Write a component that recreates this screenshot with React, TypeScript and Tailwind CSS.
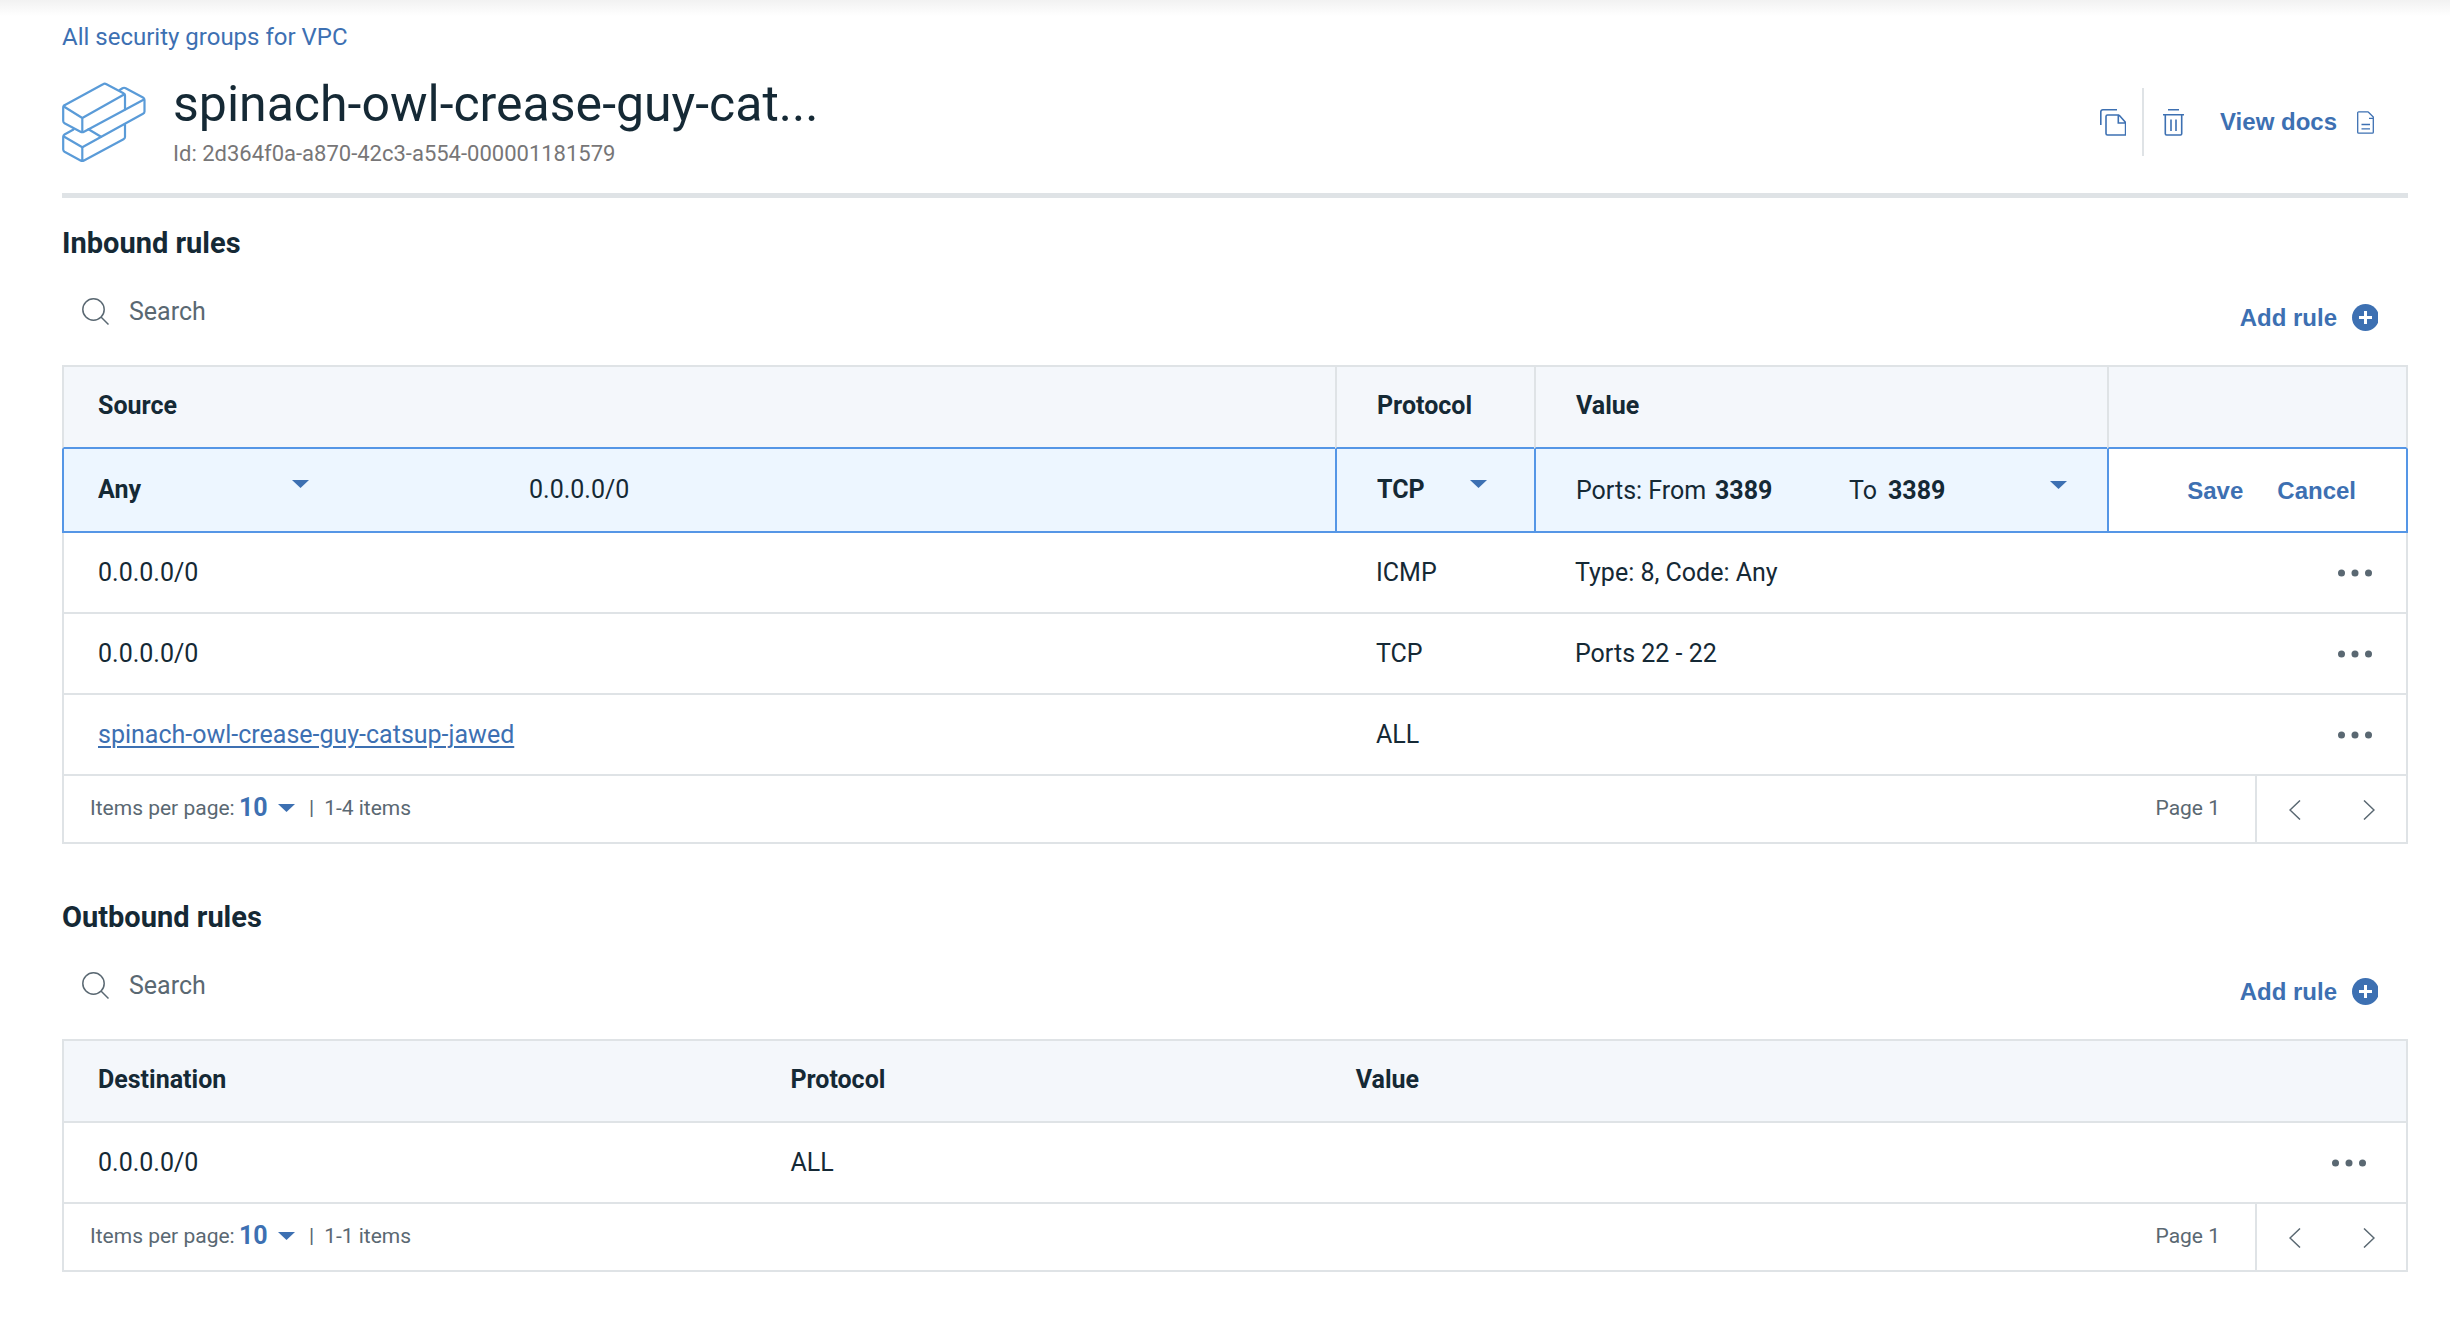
import React from "react";

const cellText = "text-[25px] leading-8";
const blueButton =
  "cursor-pointer font-['Liberation_Sans',Arial,sans-serif] text-2xl font-bold text-[#3d70b2]";

function LogoIcon() {
  return (
    <svg width="85" height="81" viewBox="0 0 85 81" fill="none" stroke="#5a9bd8" strokeWidth="2.200" strokeLinejoin="round" strokeLinecap="round" aria-hidden="true">
      <path d="M2.500 23.300 41 2.200Q42.700 1.200 44.500 2.200L61.500 11.200Q63 12 63 13.500V27.500" />
      <path d="M2.500 23.300Q1.200 24 1.200 25.500V39Q1.200 40.500 2.500 41.200L18.500 49.700Q20.300 50.700 22 49.700L82 17.500" />
      <path d="M1.800 24.500 20.300 36V50M20.300 36 62.500 12.300" />
      <path d="M57.700 8 60.500 6.200Q62 5.300 63.700 6.200L81 15.500Q82.500 16.300 82.500 18V29.500Q82.500 31 81 31.800L20.300 65.300 1.800 54.500" />
      <path d="M11.500 47.500 2.500 52.500Q1.200 53.300 1.200 55V67.500Q1.200 69 2.500 69.800L18.500 78.500Q20.300 79.500 22 78.500L61.500 57.200Q63 56.400 63 55V42.500M20.300 65.300V79" />
      <path d="M26.500 47.200 39 54.800" />
    </svg>
  );
}

function CopyIcon() {
  return (
    <svg width="26" height="27" viewBox="0 0 26 27" fill="none" stroke="#3d70b2" strokeWidth="1.600" aria-hidden="true">
      <path d="M.8 16V2.800a2 2 0 0 1 2-2H17" />
      <path d="M19 6H7.500A1.500 1.500 0 0 0 6 7.500v17A1.500 1.500 0 0 0 7.500 26H26" />
      <path d="M19 6 25.600 13.500V26M18.300 6v8H26" />
    </svg>
  );
}

function TrashIcon() {
  return (
    <svg width="21" height="27" viewBox="0 0 21 27" fill="none" stroke="#3d70b2" strokeWidth="1.600" aria-hidden="true">
      <path d="M5 .8h11M0 5.800h21M2.300 5.800v19a1.200 1.200 0 0 0 1.200 1.200h14a1.200 1.200 0 0 0 1.200-1.200v-19M8 10.500v11.500M13 10.500v11.500" />
    </svg>
  );
}

function DocIcon() {
  return (
    <svg width="17" height="23" viewBox="0 0 17 23" fill="none" stroke="#3d70b2" strokeWidth="1.300" aria-hidden="true">
      <path d="M11 .8H1.700a1 1 0 0 0-1 1v19.400a1 1 0 0 0 1 1h13.600a1 1 0 0 0 1-1V6L11 .8M12 7.300h4M4.500 13.500h8.500M4.500 17.800h8.500" />
    </svg>
  );
}

function SearchIcon() {
  return (
    <svg width="27" height="27" viewBox="0 0 27 27" fill="none" stroke="#5a6872" strokeWidth="1.500" aria-hidden="true">
      <circle cx="11.500" cy="11.500" r="10.700" />
      <path d="m19 19 7.500 7.500" />
    </svg>
  );
}

function PlusIcon() {
  return (
    <svg width="26" height="27" viewBox="0 0 26 27" aria-hidden="true">
      <circle cx="13.500" cy="13.500" r="13.500" fill="#3d70b2" />
      <path d="M13.500 7v13M7 13.500h13" stroke="#fff" strokeWidth="3" />
    </svg>
  );
}

function Caret({ className = "" }: { className?: string }) {
  return (
    <svg className={className} width="17" height="8" viewBox="0 0 17 8" aria-hidden="true">
      <path d="M0 0h17L8.500 8z" fill="#3d70b2" />
    </svg>
  );
}

function Chevron({ next = false }: { next?: boolean }) {
  return (
    <svg width="12" height="20" viewBox="0 0 12 20" fill="none" stroke="#5a6872" strokeWidth="1.500" aria-hidden="true">
      <path d={next ? "M1 .5 11 10 1 19.500" : "M11 .5 1 10l10 9.500"} />
    </svg>
  );
}

function MoreButton() {
  return (
    <button type="button" aria-label="Rule options" className="ml-auto flex h-8 cursor-pointer items-center">
      <svg width="34" height="8" viewBox="0 0 34 8" fill="#5a6872" aria-hidden="true">
        <circle cx="3.500" cy="4" r="3.500" />
        <circle cx="17" cy="4" r="3.500" />
        <circle cx="30.500" cy="4" r="3.500" />
      </svg>
    </button>
  );
}

function Toolbar({ id }: { id: string }) {
  return (
    <div className="flex items-start justify-between pl-5 pr-[30px]">
      <div className="flex h-[41px] items-center gap-5">
        <label htmlFor={id} aria-label="Search">
          <SearchIcon />
        </label>
        <input
          id={id}
          type="search"
          placeholder="Search"
          className="w-96 text-[25px] leading-8 outline-none placeholder:text-[#5a6872]"
        />
      </div>
      <button type="button" className={`${blueButton} mb-[21px] flex h-[53px] items-center gap-[15px]`}>
        Add rule
        <PlusIcon />
      </button>
    </div>
  );
}

function Pagination({ id, range }: { id: string; range: string }) {
  return (
    <div className="flex h-[68px] items-stretch border-x-2 border-b-2 border-[#dfe3e6] text-[21px] leading-8 text-[#5a6872]">
      <div className="flex flex-1 items-center pb-0.5 pl-[26px]">
        <label htmlFor={id} className="w-[149px]">Items per page:</label>
        <span className="relative flex items-center">
          <select id={id} className="w-[56px] cursor-pointer appearance-none text-[25px] leading-8 font-bold text-[#3d70b2]">
            <option>10</option>
          </select>
          <Caret className="pointer-events-none absolute right-0 top-3" />
        </span>
        <span className="ml-3.5">|</span>
        <span className="ml-2.5">{range}</span>
      </div>
      <span className="flex items-center pb-0.5 pr-[35px]">Page 1</span>
      <div className="flex border-l-2 border-[#dfe3e6]">
        <button type="button" aria-label="Previous page" className="flex w-[75px] cursor-pointer items-center justify-center pt-0.5">
          <Chevron />
        </button>
        <button type="button" aria-label="Next page" className="flex w-[74px] cursor-pointer items-center justify-center pt-0.5">
          <Chevron next />
        </button>
      </div>
    </div>
  );
}

const headCell =
  "h-[84px] border-t-2 border-b-2 bg-[#f4f7fb] pb-0.5 text-left text-[25px] leading-8 font-bold border-t-[#dfe3e6]";
const editCell = "h-[84px] border-b-2 border-l-2 border-[#5596e6] p-0";
const bodyCell = "h-[81px] border-b-2 border-b-[#dfe3e6]";

type Rule = { source: string; link?: boolean; protocol: string; value: string };

const inbound: Rule[] = [
  { source: "0.0.0.0/0", protocol: "ICMP", value: "Type: 8, Code: Any" },
  { source: "0.0.0.0/0", protocol: "TCP", value: "Ports 22 - 22" },
  { source: "spinach-owl-crease-guy-catsup-jawed", link: true, protocol: "ALL", value: "" },
];

function InboundTable() {
  const head = `${headCell} border-b-[#5596e6] border-l-2 border-l-[#dfe3e6]`;
  return (
    <table className="w-full table-fixed border-separate border-spacing-0">
      <colgroup>
        <col />
        <col className="w-[199px]" />
        <col className="w-[573px]" />
        <col className="w-[301px]" />
      </colgroup>
      <thead>
        <tr>
          <th scope="col" className={`${head} pl-[34px]`}>Source</th>
          <th scope="col" className={`${head} pl-10`}>Protocol</th>
          <th scope="col" className={`${head} pl-10`}>Value</th>
          <th scope="col" aria-label="Actions" className={`${head} border-r-2 border-r-[#dfe3e6]`} />
        </tr>
      </thead>
      <tbody>
        <tr>
          <td className={`${editCell} bg-[#edf6ff]`}>
            <div className="flex items-center pl-[34px]">
              <span className="relative flex w-[431px]">
                <select aria-label="Source type" className="w-[211px] cursor-pointer appearance-none text-[25px] leading-8 font-bold">
                  <option>Any</option>
                </select>
                <Caret className="pointer-events-none absolute left-[194px] top-1.5" />
              </span>
              <input aria-label="Source address" defaultValue="0.0.0.0/0" className={`w-60 ${cellText} outline-none`} />
            </div>
          </td>
          <td className={`${editCell} bg-[#edf6ff]`}>
            <div className="relative flex pl-10">
              <select aria-label="Protocol" className="w-[110px] cursor-pointer appearance-none text-[25px] leading-8 font-bold">
                <option>TCP</option>
              </select>
              <Caret className="pointer-events-none absolute left-[133px] top-1.5" />
            </div>
          </td>
          <td className={`${editCell} bg-[#edf6ff]`}>
            <div className="flex items-center px-10 pt-0.5">
              <label htmlFor="port-from" className={`${cellText} w-[139px] whitespace-nowrap`}>Ports: From</label>
              <input id="port-from" defaultValue="3389" className="w-[134px] text-[25px] leading-8 font-bold outline-none" />
              <label htmlFor="port-to" className={`${cellText} w-[39px]`}>To</label>
              <input id="port-to" defaultValue="3389" className="w-[120px] text-[25px] leading-8 font-bold outline-none" />
              <button type="button" aria-label="Port presets" className="ml-auto flex h-8 cursor-pointer items-start pt-1.5">
                <Caret />
              </button>
            </div>
          </td>
          <td className={`${editCell} border-r-2`}>
            <div className="flex items-center justify-end gap-[34px] pt-0.5 pr-[50px]">
              <button type="button" className={blueButton}>Save</button>
              <button type="button" className={blueButton}>Cancel</button>
            </div>
          </td>
        </tr>
        {inbound.map((rule, i) => (
          <tr key={i} className={cellText}>
            <td className={`${bodyCell} border-l-2 border-l-[#dfe3e6] pl-[34px]`}>
              {rule.link ? (
                <a href="#" className="text-[#3d70b2] underline decoration-2 underline-offset-3">{rule.source}</a>
              ) : (
                rule.source
              )}
            </td>
            <td className={`${bodyCell} pl-[41px]`}>{rule.protocol}</td>
            <td className={`${bodyCell} pl-[41px]`}>{rule.value}</td>
            <td className={`${bodyCell} border-r-2 border-r-[#dfe3e6] pr-[34px]`}>
              <MoreButton />
            </td>
          </tr>
        ))}
      </tbody>
    </table>
  );
}

function OutboundTable() {
  const head = `${headCell} border-b-[#dfe3e6]`;
  return (
    <table className="w-full table-fixed border-separate border-spacing-0">
      <colgroup>
        <col className="w-[29.3%]" />
        <col className="w-[24.1%]" />
        <col />
        <col className="w-[301px]" />
      </colgroup>
      <thead>
        <tr>
          <th scope="col" className={`${head} border-l-2 border-l-[#dfe3e6] pl-[34px]`}>Destination</th>
          <th scope="col" className={`${head} pl-[41px]`}>Protocol</th>
          <th scope="col" className={`${head} pl-[41px]`}>Value</th>
          <th scope="col" aria-label="Actions" className={`${head} border-r-2 border-r-[#dfe3e6]`} />
        </tr>
      </thead>
      <tbody>
        <tr className={cellText}>
          <td className={`${bodyCell} border-l-2 border-l-[#dfe3e6] pl-[34px]`}>0.0.0.0/0</td>
          <td className={`${bodyCell} pl-[41px]`}>ALL</td>
          <td className={`${bodyCell} pl-[41px]`} />
          <td className={`${bodyCell} border-r-2 border-r-[#dfe3e6] pr-10`}>
            <MoreButton />
          </td>
        </tr>
      </tbody>
    </table>
  );
}

export default function App() {
  return (
    <div className="min-h-screen bg-white font-[Roboto,sans-serif] text-[#152935]">
      <div className="h-[23px] bg-linear-to-b from-[#f2f2f2] to-white to-70%" />
      <main className="pl-[62px] pr-[42px]">
        <nav className="text-2xl leading-7">
          <a href="#" className="text-[#3d70b2]">All security groups for VPC</a>
        </nav>
        <header className="flex items-center justify-between border-b-[5px] border-[#dfe3e6] pt-[23px] pb-[25px]">
          <div className="flex items-center gap-[26px]">
            <div className="mt-0.5">
              <LogoIcon />
            </div>
            <div>
              <h1 className="text-[50px] leading-[60px]">spinach-owl-crease-guy-cat...</h1>
              <p className="mt-1.5 text-[22px] leading-7 text-[#777677]">Id: 2d364f0a-a870-42c3-a554-000001181579</p>
            </div>
          </div>
          <div className="mt-0.5 flex items-center pr-[34px]">
            <button type="button" aria-label="Copy" className="cursor-pointer pr-4">
              <CopyIcon />
            </button>
            <div className="h-17 w-0.5 bg-[#dfe3e6]" />
            <button type="button" aria-label="Delete" className="cursor-pointer pl-[19px]">
              <TrashIcon />
            </button>
            <a href="#" className={`${blueButton} ml-9 flex items-center gap-5`}>
              View docs
              <DocIcon />
            </a>
          </div>
        </header>

        <section className="mt-[27px]">
          <h2 className="mb-[30px] text-[29px] leading-9 font-bold">Inbound rules</h2>
          <Toolbar id="search-inbound" />
          <InboundTable />
          <Pagination id="per-page-inbound" range="1-4 items" />
        </section>

        <section className="mt-[55px] pb-12">
          <h2 className="mb-[30px] text-[29px] leading-9 font-bold">Outbound rules</h2>
          <Toolbar id="search-outbound" />
          <OutboundTable />
          <Pagination id="per-page-outbound" range="1-1 items" />
        </section>
      </main>
    </div>
  );
}
